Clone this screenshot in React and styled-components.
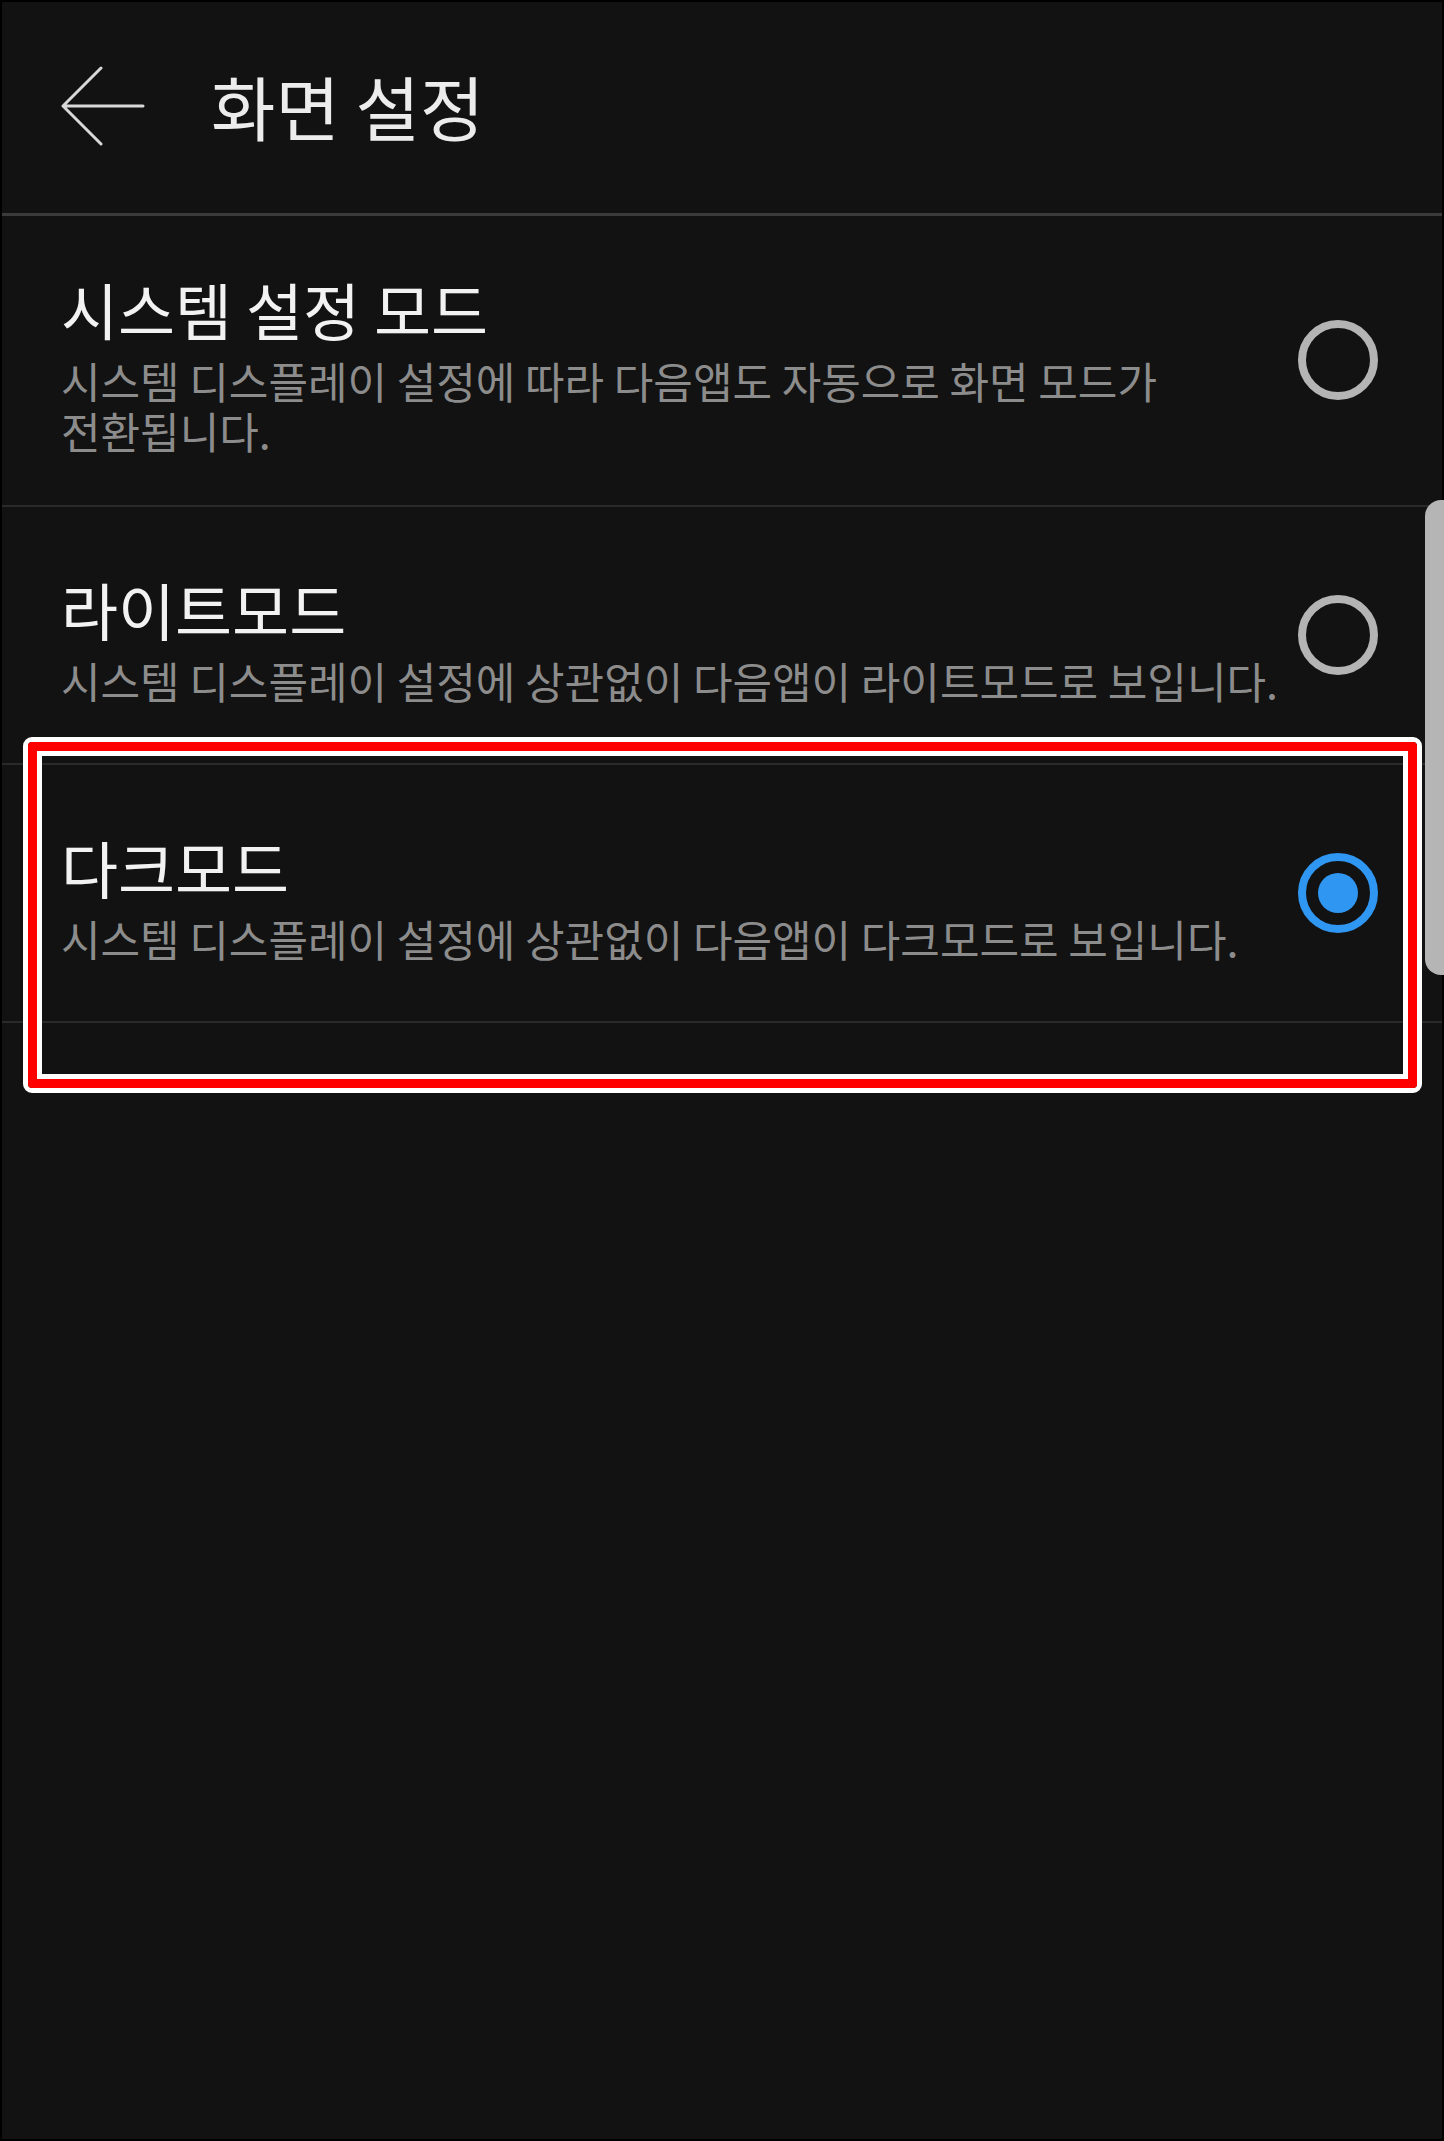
import styled, { createGlobalStyle } from "styled-components";

const GlobalStyle = createGlobalStyle`
  html, body {
    margin: 0;
    padding: 0;
    background: #121212;
  }
  * {
    box-sizing: border-box;
  }
`;

const Screen = styled.div`
  width: 1444px;
  min-height: 2141px;
  border: 2px solid #000;
  background: #121212;
  font-family: "Noto Sans CJK KR", "Noto Sans", sans-serif;
  color: #f0f0f0;
`;

const Header = styled.header`
  height: 214px;
  display: flex;
  align-items: center;
  padding: 0 0 4px 59px;
  border-bottom: 3px solid #3b3b3b;
`;

const BackButton = styled.button`
  width: 86px;
  height: 80px;
  padding: 0;
  border: none;
  background: none;
  display: flex;
  cursor: pointer;
`;

const HeaderTitle = styled.h1`
  margin: 0 0 0 64px;
  font-size: 70px;
  font-weight: 400;
  line-height: 84px;
  color: #ececec;
`;

const List = styled.div`
  position: relative;
`;

const Scrollbar = styled.div`
  position: absolute;
  top: 284px;
  right: -2px;
  width: 19px;
  height: 475px;
  background: #b5b5b5;
  border-radius: 16px 0 0 16px;
`;

const Row = styled.div`
  position: relative;
  min-height: 258px;
  display: flex;
  align-items: center;
  padding: 49px 64px 50px 59px;
  border-bottom: 2px solid #2a2a2a;
  cursor: pointer;
`;

const TextBlock = styled.div`
  flex: 1;
  min-width: 0;
  padding-top: 8px;
  margin-right: 8px;
`;

const Title = styled.div`
  font-size: 62px;
  line-height: 72px;
  color: #f2f2f2;
`;

const Subtitle = styled.div`
  margin-top: 10px;
  font-size: 43px;
  line-height: 50px;
  color: #8c8c8c;
  word-break: keep-all;
`;

const Radio = styled.div`
  width: 80px;
  height: 80px;
  flex-shrink: 0;
  border-radius: 50%;
  border: 8px solid ${(p) => (p.$checked ? "#2f96f2" : "#b4b4b4")};
  display: flex;
  align-items: center;
  justify-content: center;
`;

const Dot = styled.div`
  width: 40px;
  height: 40px;
  border-radius: 50%;
  background: #2f96f2;
`;

const Highlight = styled.div`
  position: absolute;
  top: -28px;
  left: 21px;
  right: 20px;
  bottom: -72px;
  border: 5px solid #fff;
  border-radius: 9px;
  pointer-events: none;
`;

const HighlightInner = styled.div`
  width: 100%;
  height: 100%;
  border: 9px solid #ff0000;
  border-radius: 4px;
  box-shadow: inset 0 0 0 5px #fff;
`;

const modes = [
  {
    id: "system",
    title: "시스템 설정 모드",
    desc: "시스템 디스플레이 설정에 따라 다음앱도 자동으로 화면 모드가 전환됩니다.",
  },
  {
    id: "light",
    title: "라이트모드",
    desc: "시스템 디스플레이 설정에 상관없이 다음앱이 라이트모드로 보입니다.",
  },
  {
    id: "dark",
    title: "다크모드",
    desc: "시스템 디스플레이 설정에 상관없이 다음앱이 다크모드로 보입니다.",
  },
];

const BackArrow = () => (
  <svg width="86" height="80" viewBox="0 0 86 80" fill="none">
    <path
      d="M82 40H3M40 2L2 40L40 78"
      stroke="#d9d9d9"
      strokeWidth="3"
      strokeLinecap="round"
      strokeLinejoin="round"
    />
  </svg>
);

export default function App() {
  const selected = "dark";

  return (
    <>
      <GlobalStyle />
      <Screen>
        <Header>
          <BackButton aria-label="뒤로">
            <BackArrow />
          </BackButton>
          <HeaderTitle>화면 설정</HeaderTitle>
        </Header>
        <List>
          {modes.map((m) => (
            <Row key={m.id}>
              <TextBlock>
                <Title>{m.title}</Title>
                <Subtitle>{m.desc}</Subtitle>
              </TextBlock>
              <Radio $checked={m.id === selected}>
                {m.id === selected && <Dot />}
              </Radio>
              {m.id === selected && (
                <Highlight>
                  <HighlightInner />
                </Highlight>
              )}
            </Row>
          ))}
          <Scrollbar />
        </List>
      </Screen>
    </>
  );
}
